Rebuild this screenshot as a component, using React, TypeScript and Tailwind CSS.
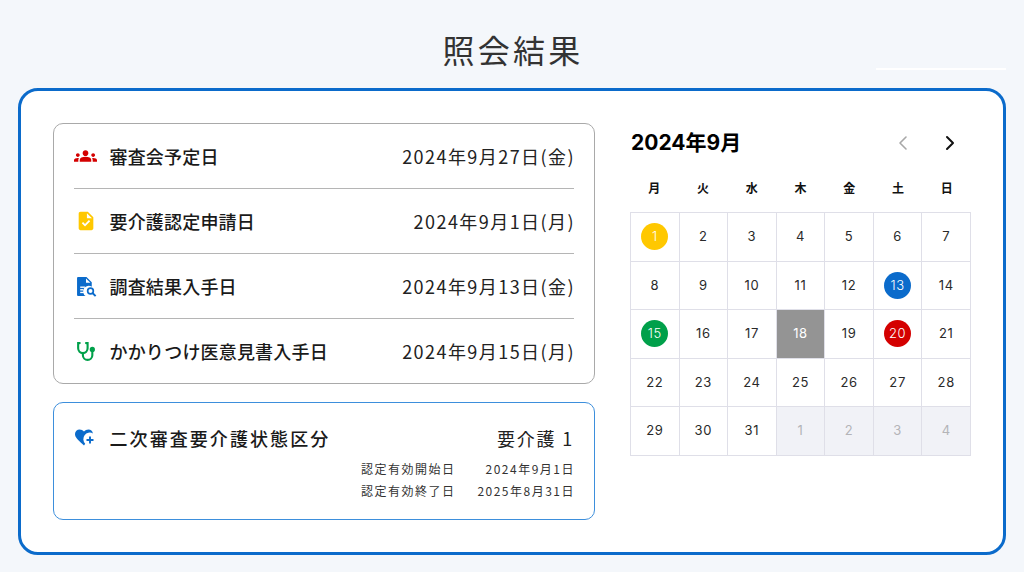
import React from 'react';
import { MdGroups, MdTask } from 'react-icons/md';
import { ChevronLeft, ChevronRight } from 'lucide-react';

const JP = "font-['Noto_Sans_CJK_JP','Noto_Sans',sans-serif]";

const DocSearchIcon = () => (
  <svg width="21" height="21" viewBox="0 0 20 20" className="text-[#0b6bcb] ml-[2px]">
    <path fill="currentColor" d="M2 1h8l5 5v4.300a5.200 5.200 0 0 0-5.900 8.700H2a1 1 0 0 1-1-1V2a1 1 0 0 1 1-1z" />
    <path fill="#fff" d="M9.500 2.300v4.200h4.200z" />
    <rect x="4" y="10" width="4.500" height="1.300" fill="#fff" />
    <rect x="4" y="12.500" width="3" height="1.300" fill="#fff" />
    <rect x="4" y="15" width="3.500" height="1.300" fill="#fff" />
    <circle cx="13.800" cy="14.300" r="2.700" fill="none" stroke="currentColor" strokeWidth="1.600" />
    <path d="M15.700 16.200l3 3" stroke="currentColor" strokeWidth="1.800" />
  </svg>
);

const StethoscopeIcon = () => (
  <svg width="21" height="21" viewBox="0 0 20 20" fill="none" stroke="#00a04a" strokeWidth="2" strokeLinecap="round">
    <path d="M4.500 2H3v5a4.500 4.500 0 0 0 9 0V2h-1.500" />
    <path d="M7.500 11.500v2a4.500 4.500 0 0 0 9 0V9" />
    <circle cx="16.500" cy="8" r="1.500" fill="#00a04a" />
  </svg>
);

const HeartPlusIcon = () => (
  <svg width="22" height="22" viewBox="0 0 22 22" className="text-[#0b6bcb] -ml-[1px]">
    <path fill="currentColor" d="M10 18.500l-1.300-1.200C4 13.100 1 10.400 1 7.100 1 4.400 3.100 2.500 5.600 2.500c1.700 0 3.300.8 4.400 2.100 1.100-1.300 2.700-2.100 4.400-2.100 2.300 0 4.200 1.600 4.500 3.900a6.500 6.500 0 0 0-7.700 10.300z" />
    <path d="M16 9.500v7M12.500 13h7" stroke="currentColor" strokeWidth="1.900" />
  </svg>
);

const rows = [
  { icon: <MdGroups size={24} color="#d40000" />, label: '審査会予定日', date: '2024年9月27日(金)' },
  { icon: <MdTask size={22} color="#ffc800" />, label: '要介護認定申請日', date: '2024年9月1日(月)' },
  { icon: <DocSearchIcon />, label: '調査結果入手日', date: '2024年9月13日(金)' },
  { icon: <StethoscopeIcon />, label: 'かかりつけ医意見書入手日', date: '2024年9月15日(月)' },
];

const weekdays = ['月', '火', '水', '木', '金', '土', '日'];

const marks: Record<number, string> = {
  1: 'bg-[#ffc800]',
  13: 'bg-[#0b6bcb]',
  15: 'bg-[#00a04a]',
  20: 'bg-[#d40000]',
};

const days = [
  ...Array.from({ length: 31 }, (_, i) => ({ day: i + 1, out: false })),
  ...[1, 2, 3, 4].map(day => ({ day, out: true })),
];

const Calendar = () => (
  <div className="w-[341px] shrink-0">
    <div className="flex items-center justify-between h-10">
      <h2 className="text-[21px] font-bold text-black pl-[1px] font-['Inter','Noto_Sans_CJK_JP',sans-serif]">2024年9月</h2>
      <div className="flex items-center gap-[23px] pr-[9px]">
        <ChevronLeft size={24} strokeWidth={1.6} className="text-[#a8a8a8]" />
        <ChevronRight size={24} strokeWidth={2} className="text-[#111]" />
      </div>
    </div>
    <div className="grid grid-cols-7 h-[49px] items-center">
      {weekdays.map(w => (
        <div key={w} className={`${JP} text-center text-xs font-bold text-[#111]`}>{w}</div>
      ))}
    </div>
    <div className="grid grid-cols-7 border-t border-l border-[#dfdfe8] font-['Inter',sans-serif] text-[13px] tracking-[0.05em] text-[#2a2a2a]">
      {days.map((d, i) => {
        const mark = !d.out ? marks[d.day] : undefined;
        const today = !d.out && d.day === 18;
        return (
          <div
            key={i}
            className={`h-[48.600px] flex items-center justify-center border-r border-b border-[#dfdfe8] ${today ? 'bg-[#949494] text-white' : ''} ${d.out ? 'bg-[#f1f2f7] text-[#b4b4b8]' : ''}`}
          >
            {mark ? (
              <span className={`w-[27px] h-[27px] rounded-full flex items-center justify-center text-white font-light ${mark}`}>{d.day}</span>
            ) : d.day}
          </div>
        );
      })}
    </div>
  </div>
);

export default function App() {
  return (
    <div className={`${JP} w-[1024px] h-[572px] overflow-hidden bg-[#f4f7fb] flex flex-col`}>
      <header className="relative h-[88px] shrink-0 flex justify-center pt-[25px]">
        <h1 className="text-[32px] leading-[48px] tracking-[0.1em] pl-[2px] font-normal text-[#333]">照会結果</h1>
        <div className="absolute right-[18px] top-[68px] w-[130px] h-[2px] bg-white" />
      </header>
      <main className="mx-[18px] h-[467px] bg-white border-[3px] border-[#0b6bcb] rounded-[20px] flex gap-[35px] pl-[32px] pt-[32px]">
        <div className="w-[542px] shrink-0 flex flex-col gap-[18px]">
          <section className="h-[261px] border border-[#a9a9a9] rounded-[10px] px-5 flex flex-col">
            {rows.map((r, i) => (
              <div
                key={r.label}
                className={`flex-1 flex items-center justify-between ${i < rows.length - 1 ? 'border-b border-[#b5b5b5]' : ''}`}
              >
                <div className="flex items-center gap-[13px]">
                  <span className="w-[23px] flex justify-center">{r.icon}</span>
                  <span className="text-lg font-medium tracking-[0.01em] -ml-[0.500px] text-[#1a1a1a]">{r.label}</span>
                </div>
                <span className="text-lg tracking-[0.08em] -mr-[1px] text-[#222]">{r.date}</span>
              </div>
            ))}
          </section>
          <section className="h-[118px] border border-[#3d8fdc] rounded-[10px] px-5 pt-5">
            <div className="flex items-center justify-between h-[30px]">
              <div className="flex items-center gap-[13px]">
                <span className="w-[23px] flex justify-center"><HeartPlusIcon /></span>
                <span className="text-lg font-medium tracking-[0.115em] -ml-[0.500px] text-[#1a1a1a]">二次審査要介護状態区分</span>
              </div>
              <span className="text-lg tracking-[0.1em] text-[#222]">要介護 1</span>
            </div>
            <div className="mt-[5px] flex flex-col items-end gap-[1px] text-xs leading-[21px] tracking-[0.125em] -mr-[1px] text-[#333]">
              <div className="flex justify-between w-[214px]"><span>認定有効開始日</span><span>2024年9月1日</span></div>
              <div className="flex justify-between w-[214px]"><span>認定有効終了日</span><span>2025年8月31日</span></div>
            </div>
          </section>
        </div>
        <Calendar />
      </main>
    </div>
  );
}
